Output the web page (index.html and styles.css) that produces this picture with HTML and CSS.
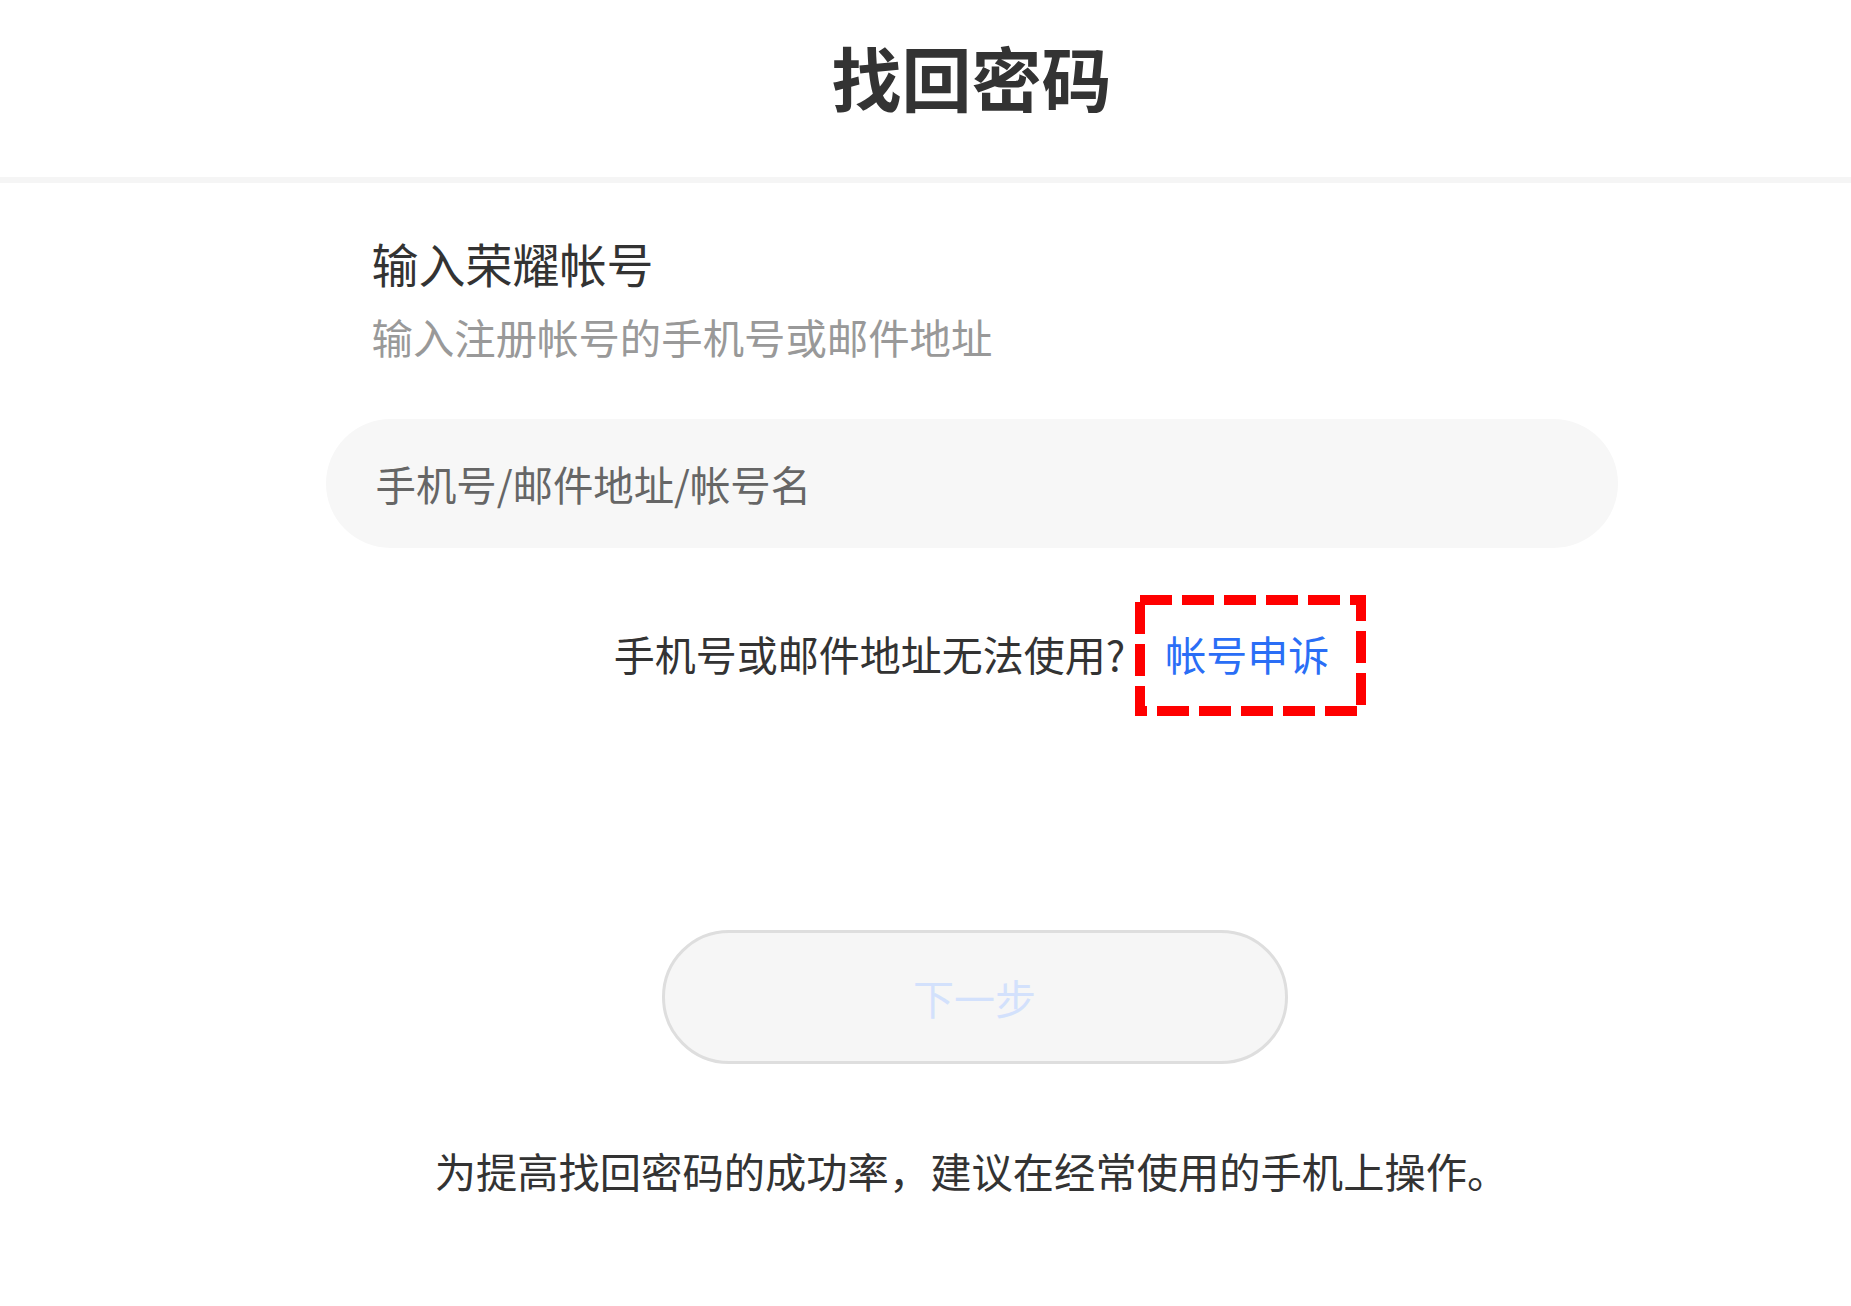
FILE: index.html
```html
<!DOCTYPE html>
<html lang="zh-CN">
<head>
<meta charset="utf-8">
<title>找回密码</title>
<link rel="stylesheet" href="styles.css">
</head>
<body>
<header class="top">
  <h1 class="title">找回密码</h1>
</header>
<main class="page">
  <div class="form">
    <div class="heading">
      <div class="label">输入荣耀帐号</div>
      <div class="hint">输入注册帐号的手机号或邮件地址</div>
    </div>
    <input class="field" type="text" placeholder="手机号/邮件地址/帐号名">
    <div class="appeal-row">
      <span class="question">手机号或邮件地址无法使用?</span>
      <a class="appeal" href="#">帐号申诉<svg class="mark" width="231" height="121" viewBox="0 0 231 121"><rect x="5" y="5" width="221" height="111" fill="none" stroke="#ff0000" stroke-width="10" stroke-dasharray="32 10"/></svg></a>
    </div>
    <button class="next" type="button">下一步</button>
    <p class="tip">为提高找回密码的成功率，建议在经常使用的手机上操作。</p>
  </div>
</main>
</body>
</html>
```

FILE: styles.css
```css
html, body {
  margin: 0;
  padding: 0;
  background: #ffffff;
}

body {
  font-family: "Noto Sans CJK SC", "Noto Sans", sans-serif;
  color: #333333;
}

.top {
  height: 177px;
  padding-left: 92px;
  box-sizing: content-box;
  border-bottom: 6px solid #f5f5f5;
  display: flex;
  justify-content: center;
}

.title {
  margin: 42px 0 0;
  font-size: 70px;
  line-height: 70px;
  font-weight: 700;
  color: #333333;
}

.page {
  padding-left: 92px;
}

.form {
  width: 1292px;
  margin: 0 auto;
  display: flex;
  flex-direction: column;
}

.heading {
  padding-left: 46px;
  margin-top: 50px;
}

.label {
  font-size: 47px;
  line-height: 60px;
  color: #333333;
}

.hint {
  margin-top: 13px;
  font-size: 41.4px;
  line-height: 60px;
  color: #999999;
}

.field {
  margin-top: 53px;
  height: 129px;
  box-sizing: border-box;
  border: none;
  outline: none;
  border-radius: 65px;
  background: #f7f7f7;
  padding: 0 50px;
  font-family: "Noto Sans CJK SC", "Noto Sans", sans-serif;
  font-size: 40.4px;
  color: #333333;
}

.field::placeholder {
  color: #666666;
}

.appeal-row {
  margin-top: 75px;
  display: flex;
  justify-content: center;
  align-items: center;
  gap: 40px;
  font-size: 41px;
  line-height: 60px;
}

.question {
  color: #333333;
}

.appeal {
  position: relative;
  color: #2a6ef6;
  text-decoration: none;
}

.mark {
  position: absolute;
  left: -30px;
  top: -28px;
  display: block;
}

.next {
  margin: 247px 0 0 336px;
  width: 626px;
  height: 134px;
  border: 3px solid #dedede;
  border-radius: 67px;
  background: #f6f6f6;
  font-family: "Noto Sans CJK SC", "Noto Sans", sans-serif;
  font-size: 41px;
  color: #d3e1fc;
  padding: 0;
}

.tip {
  margin: 76px 0 0;
  text-align: center;
  font-size: 41.3px;
  line-height: 60px;
  color: #333333;
}
```
